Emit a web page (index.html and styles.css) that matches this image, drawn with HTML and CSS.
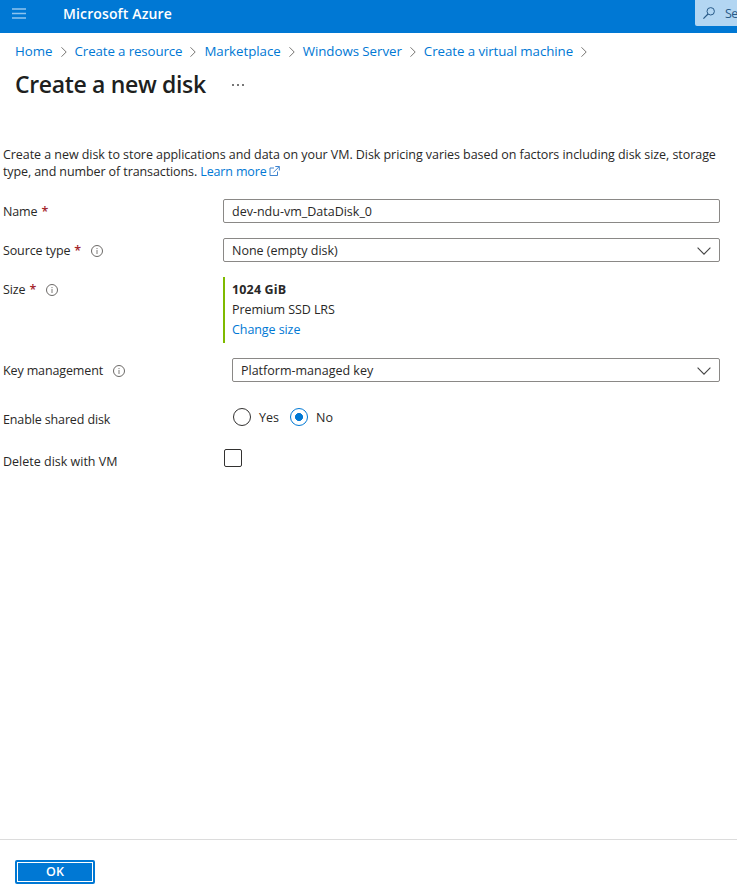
FILE: index.html
```
<!DOCTYPE html>
<html lang="en">
<head>
<meta charset="utf-8">
<title>Create a new disk - Microsoft Azure</title>
<link rel="stylesheet" href="styles.css">
</head>
<body>
<svg class="defs" width="0" height="0" aria-hidden="true">
  <symbol id="sep" viewBox="0 0 6 10"><path d="M.5 .3 5.2 5 .5 9.7" fill="none" stroke="#767472"/></symbol>
  <symbol id="down" viewBox="0 0 14 8"><path d="M.6 .7 7 7.1 13.4 .7" fill="none" stroke="#444" stroke-width="1.1"/></symbol>
  <symbol id="info" viewBox="0 0 12 12"><circle cx="6" cy="6" r="5.5" fill="none" stroke="#6b6967"/><path d="M6 3v1.1M6 5v4" stroke="#7c7a78"/></symbol>
</svg>
<header class="topbar">
  <svg class="menu" width="14" height="11" viewBox="0 0 14 11"><path d="M0 1h14M0 5.5h14M0 10h14" stroke="#8fc4ee" stroke-width="1.5"/></svg>
  <span class="brand">Microsoft Azure</span>
  <div class="search">
    <svg width="12" height="12" viewBox="0 0 12 12"><circle cx="7.7" cy="4.3" r="3.7" fill="none" stroke="#285a88"/><path d="M5 7 .4 11.6" stroke="#285a88" stroke-width="1.2"/></svg>
    <span>Se</span>
  </div>
</header>
<nav class="crumbs">
  <a class="c1">Home</a><svg><use href="#sep"/></svg>
  <a class="c2">Create a resource</a><svg><use href="#sep"/></svg>
  <a class="c3">Marketplace</a><svg><use href="#sep"/></svg>
  <a class="c4">Windows Server</a><svg><use href="#sep"/></svg>
  <a class="c5">Create a virtual machine</a><svg><use href="#sep"/></svg>
</nav>
<div class="title">
  <h1>Create a new disk</h1>
  <span class="more"><i></i><i></i><i></i></span>
</div>
<main>
  <p class="intro"><span class="l1">Create a new disk to store applications and data on your VM. Disk pricing varies based on factors including disk size, storage</span><br><span class="l2">type, and number of transactions.</span> <a class="learn">Learn more</a>
    <svg class="ext" width="11" height="10" viewBox="0 0 11 10"><path d="M5 2H1v7.5h7.5V5.5M6.3.5h4v4M10.2.6 4.3 6.5" fill="none" stroke="#3d83cf"/></svg></p>
  <div class="row name"><label>Name <b>*</b></label><div class="field">dev-ndu-vm_DataDisk_0</div></div>
  <div class="row"><label>Source type <b>*</b><svg class="info"><use href="#info"/></svg></label><div class="field">None (empty disk)<svg class="down"><use href="#down"/></svg></div></div>
  <div class="row size"><label>Size <b>*</b><svg class="info"><use href="#info"/></svg></label>
    <div class="sizebox"><strong>1024 GiB</strong><span>Premium SSD LRS</span><a>Change size</a></div></div>
  <div class="row"><label>Key management<svg class="info"><use href="#info"/></svg></label><div class="field inset">Platform-managed key<svg class="down"><use href="#down"/></svg></div></div>
  <div class="row shared"><label>Enable shared disk</label>
    <div class="radios"><span class="radio"></span><span class="yes">Yes</span><span class="radio on"></span><span>No</span></div></div>
  <div class="row delete"><label>Delete disk with VM</label><span class="check"></span></div>
</main>
<footer><button>OK</button></footer>
</body>
</html>
```
FILE: styles.css
```
* { box-sizing: border-box; }
body {
  margin: 0;
  height: 885px;
  overflow: hidden;
  display: flex;
  flex-direction: column;
  background: #fff;
  color: #292827;
  font: 12.5px/18px "Open Sans", "Noto Sans", sans-serif;
  white-space: nowrap;
}
.defs { position: absolute; }
a { color: #0078d4; }
.topbar { height: 33px; flex: none; background: #0078d4; display: flex; align-items: flex-start; }
.menu { margin: 8px 0 0 12px; }
.brand { margin: 5px 0 0 37px; color: #fff; font-size: 14px; font-weight: 600; letter-spacing: .13px; }
.search {
  margin-left: auto;
  width: 42px;
  height: 26px;
  background: #b3d6f2;
  border-radius: 0 0 0 2px;
  display: flex;
  color: #285a88;
}
.search svg { flex: none; margin: 7px 10px 0 8px; }
.search span { margin-top: 5px; letter-spacing: -.5px; }
.crumbs { display: flex; align-items: center; height: 18px; margin: 9px 0 0 15px; font-size: 13.3px; }
.crumbs svg { width: 6px; height: 10px; flex: none; margin: 1px 8px 0; }
.c2 { letter-spacing: -.12px; }
.c3, .c4 { letter-spacing: -.04px; }
.c5 { letter-spacing: -.07px; }
.title { display: flex; height: 32px; margin: 8px 0 1px 15px; }
h1 { margin: 0; width: 217px; font-size: 23px; line-height: 32px; font-weight: 600; color: #201f1e; letter-spacing: -.33px; }
.more { display: flex; gap: 3px; margin-top: 16px; }
.more i { width: 2px; height: 2px; background: #777; }
main { padding: 0 17px 0 3px; margin-top: 45px; flex: 1; }
.intro { margin: 0; line-height: 17px; }
.l1 { letter-spacing: -.057px; }
.l2 { letter-spacing: -.1px; }
.learn { letter-spacing: -.15px; }
.ext { margin-left: -1px; }
.row { display: flex; margin-bottom: 15px; }
.name { margin-top: 19px; }
label { width: 220px; flex: none; padding-top: 2px; display: flex; align-items: center; height: 24px; letter-spacing: -.13px; }
label b { color: #a4262c; font-weight: 600; margin-left: 4px; }
.info { width: 12px; height: 12px; margin: 0 0 0 10px; }
.field {
  flex: 1;
  height: 24px;
  border: 1px solid #8a8886;
  border-radius: 2px;
  padding: 2px 8px 0;
  display: flex;
  align-items: center;
  justify-content: space-between;
}
.inset { margin-left: 9px; }
.down { width: 14px; height: 8px; margin-top: -1px; }
.sizebox { height: 66px; border-left: 2px solid #7fba00; padding: 3px 0 0 7px; display: flex; flex-direction: column; line-height: 20px; letter-spacing: -.08px; }
.sizebox strong { letter-spacing: .15px; }
.shared { margin-top: 25px; height: 24px; margin-bottom: 18px; }
.radios { display: flex; align-items: center; height: 20px; margin-left: 10px; }
.radios span:not(.radio) { padding-top: 2px; }
.radio { width: 18px; height: 18px; border: 1px solid #323130; border-radius: 50%; margin-right: 8px; }
.radio.on { border-color: #0078d4; background: radial-gradient(circle, #0078d4 3.7px, transparent 4.3px); }
.yes { width: 31px; }
.delete label { letter-spacing: 0; }
.check { width: 18px; height: 18px; border: 1px solid #323130; border-radius: 2px; margin-left: 1px; }
footer { height: 46px; flex: none; border-top: 1px solid #dcdcdc; padding: 20px 0 0 15px; }
button {
  display: block;
  width: 80px;
  height: 24px;
  padding: 0;
  background: #0078d4;
  border: 2px solid #0078d4;
  border-radius: 2px;
  box-shadow: inset 0 0 0 1px #fff;
  color: #fff;
  font: 600 12.5px/18px "Open Sans", "Noto Sans", sans-serif;
}
```
